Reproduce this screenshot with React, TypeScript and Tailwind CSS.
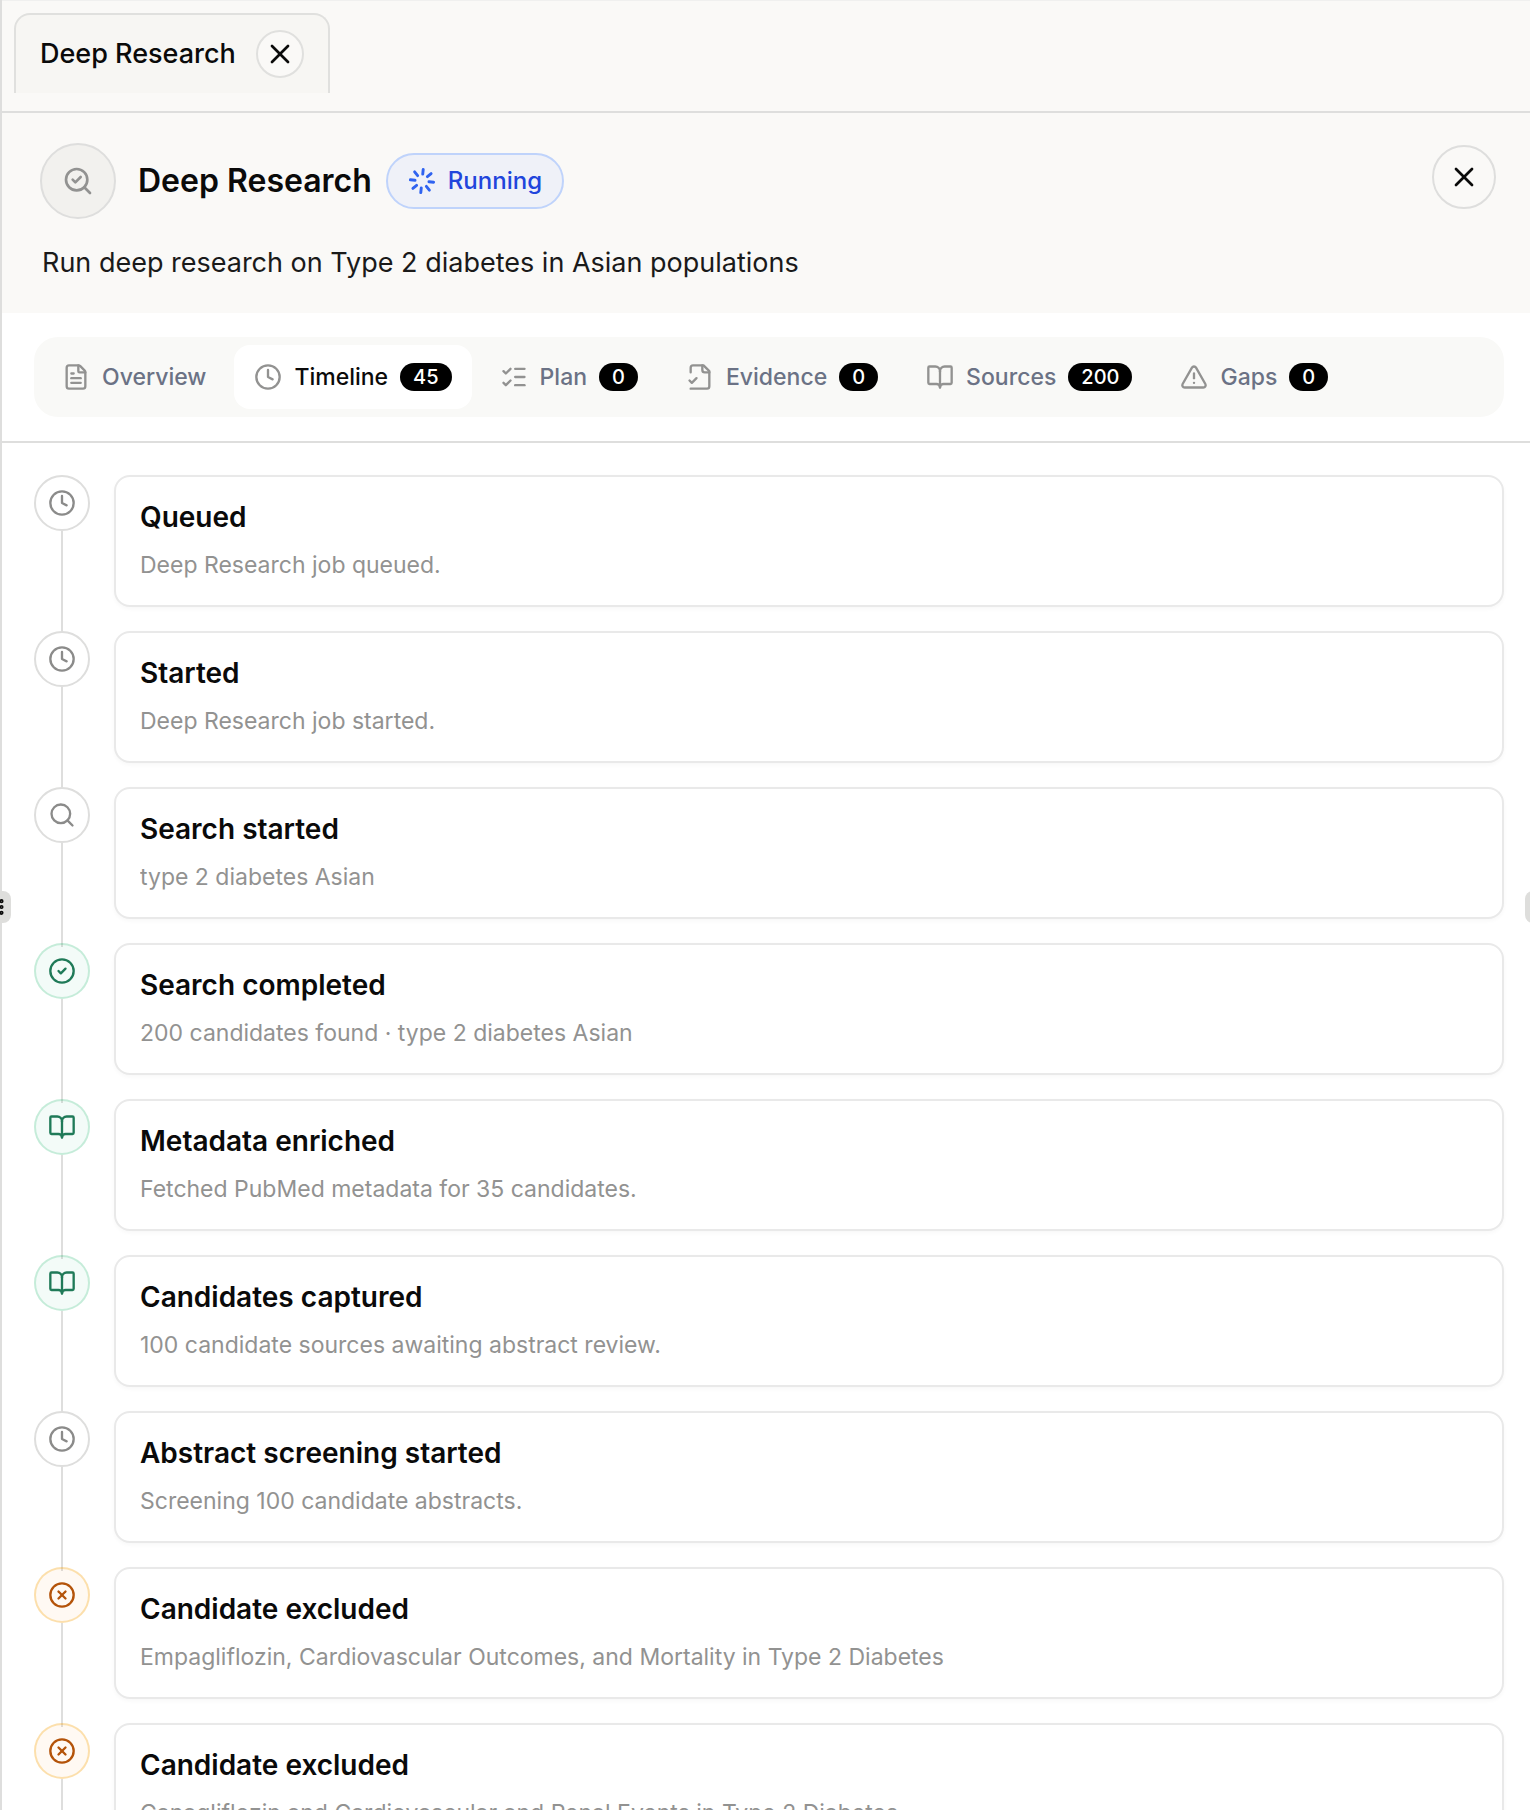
import React, { useState } from 'react';
import {
  BookOpen,
  CircleCheck,
  CircleX,
  Clock,
  FileText,
  GripVertical,
  ListChecks,
  Loader,
  Search,
  TriangleAlert,
  X,
  type LucideIcon,
} from 'lucide-react';
import { clsx } from 'clsx';

type Tone = 'neutral' | 'success' | 'warning';

interface TabItem {
  id: string;
  label: string;
  icon: React.ReactNode;
  count?: number;
}

interface TimelineEvent {
  title: string;
  description: string;
  icon: LucideIcon;
  tone: Tone;
}

const SearchCheckIcon = ({ className }: { className?: string }) => (
  <svg
    viewBox="0 0 24 24"
    fill="none"
    stroke="currentColor"
    strokeWidth="2"
    strokeLinecap="round"
    strokeLinejoin="round"
    className={className}
    aria-hidden="true"
  >
    <path d="m8 11 2 2 4-4" />
    <circle cx="11" cy="11" r="8" />
    <path d="m21 21-4.3-4.3" />
  </svg>
);

const EvidenceIcon = ({ className }: { className?: string }) => (
  <svg
    viewBox="0 0 24 24"
    fill="none"
    stroke="currentColor"
    strokeWidth="2"
    strokeLinecap="round"
    strokeLinejoin="round"
    className={className}
    aria-hidden="true"
  >
    <path d="M4 22h14a2 2 0 0 0 2-2V7l-5-5H6a2 2 0 0 0-2 2v4" />
    <path d="M14 2v4a2 2 0 0 0 2 2h4" />
    <path d="m3 15 2 2 4-4" />
  </svg>
);

const tabs: TabItem[] = [
  { id: 'overview', label: 'Overview', icon: <FileText className="size-7" /> },
  { id: 'timeline', label: 'Timeline', icon: <Clock className="size-7" />, count: 45 },
  { id: 'plan', label: 'Plan', icon: <ListChecks className="size-7" />, count: 0 },
  { id: 'evidence', label: 'Evidence', icon: <EvidenceIcon className="size-7" />, count: 0 },
  { id: 'sources', label: 'Sources', icon: <BookOpen className="size-7" />, count: 200 },
  { id: 'gaps', label: 'Gaps', icon: <TriangleAlert className="size-7" />, count: 0 },
];

const events: TimelineEvent[] = [
  { title: 'Queued', description: 'Deep Research job queued.', icon: Clock, tone: 'neutral' },
  { title: 'Started', description: 'Deep Research job started.', icon: Clock, tone: 'neutral' },
  { title: 'Search started', description: 'type 2 diabetes Asian', icon: Search, tone: 'neutral' },
  {
    title: 'Search completed',
    description: '200 candidates found · type 2 diabetes Asian',
    icon: CircleCheck,
    tone: 'success',
  },
  {
    title: 'Metadata enriched',
    description: 'Fetched PubMed metadata for 35 candidates.',
    icon: BookOpen,
    tone: 'success',
  },
  {
    title: 'Candidates captured',
    description: '100 candidate sources awaiting abstract review.',
    icon: BookOpen,
    tone: 'success',
  },
  {
    title: 'Abstract screening started',
    description: 'Screening 100 candidate abstracts.',
    icon: Clock,
    tone: 'neutral',
  },
  {
    title: 'Candidate excluded',
    description: 'Empagliflozin, Cardiovascular Outcomes, and Mortality in Type 2 Diabetes',
    icon: CircleX,
    tone: 'warning',
  },
  {
    title: 'Candidate excluded',
    description: 'Canagliflozin and Cardiovascular and Renal Events in Type 2 Diabetes',
    icon: CircleX,
    tone: 'warning',
  },
];

const toneClasses: Record<Tone, string> = {
  neutral: 'border-[#dededd] bg-white text-[#8b8b8a]',
  success: 'border-[#10b060]/20 bg-[#10a878]/5 text-[#1f7a58]',
  warning: 'border-[#f5a50b]/30 bg-[#ff8c1a]/5 text-[#b45309]',
};

const TimelineRow = ({ event }: { event: TimelineEvent }) => {
  const Icon = event.icon;

  return (
    <li className="flex gap-6">
      <div className="flex flex-col items-center">
        <span
          className={clsx(
            'relative flex size-14 shrink-0 items-center justify-center rounded-full border-2',
            toneClasses[event.tone]
          )}
        >
          <Icon className="size-7" />
        </span>
        {/* runs slightly under the next marker */}
        <span className="-mb-7 w-0.5 flex-1 bg-[#dededd]" />
      </div>
      <article className="min-w-0 flex-1 rounded-2xl border-2 border-[#e9e9e9] bg-white px-6 py-5 shadow-[0_2px_4px_rgba(0,0,0,0.03)]">
        <h3 className="text-[28px] leading-10 font-semibold text-[#0a0a0a]">{event.title}</h3>
        <p className="mt-2 truncate text-[23px] leading-10 text-[#929291]">{event.description}</p>
      </article>
    </li>
  );
};

const App: React.FC = () => {
  const [activeTab, setActiveTab] = useState('timeline');

  return (
    <div className="relative h-screen overflow-hidden bg-white font-['Inter','Liberation_Sans',sans-serif] text-[#0a0a0a]">
      <div className="flex h-full flex-col border-l-2 border-[#dededd]">
        <div className="flex h-[113px] shrink-0 items-start border-t border-b-2 border-t-[#f0f0ef] border-b-[#dededd] bg-[#faf9f7] px-3 pt-3">
          <div className="flex h-20 items-center gap-5 rounded-t-2xl border-2 border-b-0 border-[#e0e0de] bg-[#f7f6f3] px-6">
            <span className="text-[27px] leading-10 font-medium">Deep Research</span>
            <button
              type="button"
              aria-label="Close tab"
              className="flex size-12 items-center justify-center rounded-full border-2 border-[#e0e0de] bg-[#faf9f7]"
            >
              <X className="size-8" />
            </button>
          </div>
        </div>

        <header className="flex shrink-0 items-start justify-between bg-[#faf9f7] pt-[30px] pr-[34px] pb-[30px] pl-[38px]">
          <div>
            <div className="flex items-center">
              <span className="flex size-[76px] items-center justify-center rounded-full border-2 border-[#dededd] bg-[#f2f1ee] text-[#929291]">
                <SearchCheckIcon className="size-8" />
              </span>
              <h1 className="ml-[22px] text-[32px] leading-10 font-semibold">Deep Research</h1>
              <span className="ml-3.5 flex h-14 items-center gap-3 rounded-full border-2 border-[#bfd3fb] bg-[#eff1f8] px-5 text-[24px] font-medium text-[#2145dc]">
                <Loader className="size-7 rotate-6 text-[#2f63f0]" strokeWidth={2.5} />
                Running
              </span>
            </div>
            <p className="mt-6 ml-0.5 text-[27px] leading-10 text-[#1a1a1a]">
              Run deep research on Type 2 diabetes in Asian populations
            </p>
          </div>
          <button
            type="button"
            aria-label="Close panel"
            className="mt-0.5 flex size-16 items-center justify-center rounded-full border-2 border-[#dededd]"
          >
            <X className="size-8" />
          </button>
        </header>

        <div className="shrink-0 border-b-2 border-[#dededd] py-6 pr-[26px] pl-8">
          <div role="tablist" className="flex gap-2 rounded-3xl bg-[#f9f9f7] p-2">
            {tabs.map((tab) => {
              const isActive = tab.id === activeTab;

              return (
                <button
                  key={tab.id}
                  type="button"
                  role="tab"
                  aria-selected={isActive}
                  onClick={() => setActiveTab(tab.id)}
                  className={clsx(
                    'flex h-16 items-center gap-3 rounded-2xl px-5 text-[23px] font-medium',
                    isActive ? 'bg-white text-[#0a0a0a]' : 'text-[#6b7285]'
                  )}
                >
                  <span className="text-[#929291]">{tab.icon}</span>
                  {tab.label}
                  {tab.count !== undefined && (
                    <span className="flex h-7 items-center rounded-full bg-black px-[13px] text-[20px] text-white">
                      {tab.count}
                    </span>
                  )}
                </button>
              );
            })}
          </div>
        </div>

        <main className="min-h-0 flex-1 overflow-hidden pt-8 pr-[26px] pl-8">
          <ol className="flex flex-col gap-6">
            {events.map((event, index) => (
              <TimelineRow key={index} event={event} />
            ))}
          </ol>
        </main>
      </div>

      {/* panel resize handles, half hidden by the panel edges */}
      <div className="absolute top-1/2 -left-[13px] -mt-3.5 flex h-8 w-6 items-center justify-center rounded-lg bg-[#dededc]">
        <GripVertical className="size-5 shrink-0" strokeWidth={3} />
      </div>
      <div className="absolute top-1/2 -right-[19px] -mt-3.5 h-8 w-6 rounded-lg bg-[#dededc]" />
    </div>
  );
};

export default App;
